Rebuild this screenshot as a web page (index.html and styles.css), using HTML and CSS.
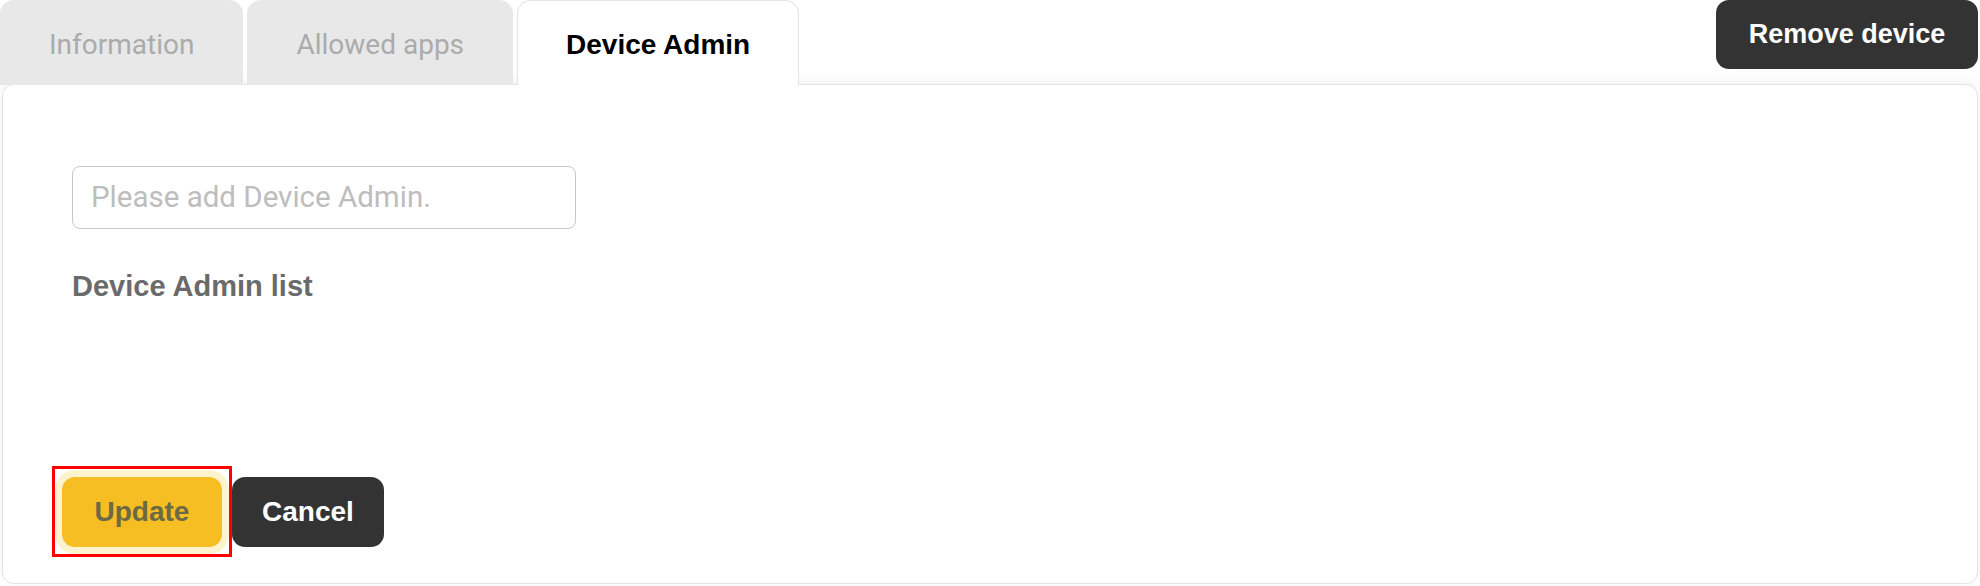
FILE: index.html
```html
<!DOCTYPE html>
<html lang="en">
<head>
<meta charset="utf-8">
<title>Device Admin</title>
<link rel="stylesheet" href="styles.css">
</head>
<body>
<div class="page">
  <div class="topbar">
    <div class="tabs">
      <div class="tab">Information</div>
      <div class="tab">Allowed apps</div>
      <div class="tab active">Device Admin</div>
    </div>
    <button class="btn btn-dark remove">Remove device</button>
  </div>
  <div class="panel">
    <div class="content">
      <input class="field" type="text" placeholder="Please add Device Admin.">
      <div class="list-title">Device Admin list</div>
    </div>
    <div class="actions">
      <button class="btn btn-yellow highlighted">Update</button>
      <button class="btn btn-dark cancel">Cancel</button>
    </div>
  </div>
</div>
</body>
</html>
```
FILE: styles.css
```css
* { box-sizing: border-box; }
html, body {
  margin: 0;
  padding: 0;
  background: #ffffff;
  font-family: Roboto, "Liberation Sans", sans-serif;
}
.page {
  width: 1980px;
  height: 586px;
  display: flex;
  flex-direction: column;
}
.topbar {
  display: flex;
  justify-content: space-between;
  align-items: flex-start;
  height: 84px;
  position: relative;
  z-index: 2;
}
.tabs {
  display: flex;
  gap: 4px;
  height: 85px;
}
.tab {
  height: 85px;
  padding: 4px 49px 0;
  display: flex;
  align-items: center;
  background: #e8e8e8;
  color: #ababab;
  font-size: 28px;
  border-radius: 14px 14px 0 0;
}
.tab.active {
  background: #ffffff;
  color: #000000;
  font-family: "Liberation Sans", Arial, sans-serif;
  font-weight: 700;
  font-size: 28px;
  border: 1px solid #e4e4e4;
  border-bottom: none;
  padding: 4px 48px 0;
}
.btn {
  border: none;
  font-family: "Liberation Sans", Arial, sans-serif;
  font-weight: 700;
  font-size: 28px;
  border-radius: 13px;
  cursor: pointer;
}
.btn-dark {
  background: #333333;
  color: #ffffff;
}
.remove {
  width: 262px;
  height: 69px;
  margin-right: 2px;
  font-size: 27px;
}
.panel {
  margin: 0 2px 2px;
  flex: 1;
  border: 1px solid #e3e3e3;
  border-radius: 12px;
  box-shadow: 0 -3px 14px rgba(0, 0, 0, 0.05);
  padding: 81px 60px 36px 59px;
  display: flex;
  flex-direction: column;
  justify-content: space-between;
  position: relative;
  z-index: 1;
}
.content {
  padding-left: 10px;
  display: flex;
  flex-direction: column;
}
.field {
  width: 504px;
  height: 63px;
  border: 1px solid #c8c8c8;
  border-radius: 8px;
  padding: 0 14px 2px 18px;
  font-family: Roboto, "Liberation Sans", sans-serif;
  font-size: 29.5px;
  color: #333;
  outline: none;
}
.field::placeholder { color: #bdbdbd; }
.list-title {
  margin-top: 41px;
  font-family: "Liberation Sans", Arial, sans-serif;
  font-size: 29px;
  font-weight: 700;
  color: #6a6a6a;
}
.actions {
  display: flex;
  gap: 10px;
  padding-left: 0;
}
.btn-yellow {
  background: #f6be22;
  color: #6b6a44;
  width: 160px;
  height: 70px;
}
.highlighted {
  position: relative;
  box-shadow: 0 0 0 7px #fdf3cf;
}
.highlighted::after {
  content: "";
  position: absolute;
  left: -10px;
  top: -11px;
  right: -10px;
  bottom: -10px;
  border: 3px solid #ff0000;
}
.cancel {
  width: 152px;
  height: 70px;
}
```
